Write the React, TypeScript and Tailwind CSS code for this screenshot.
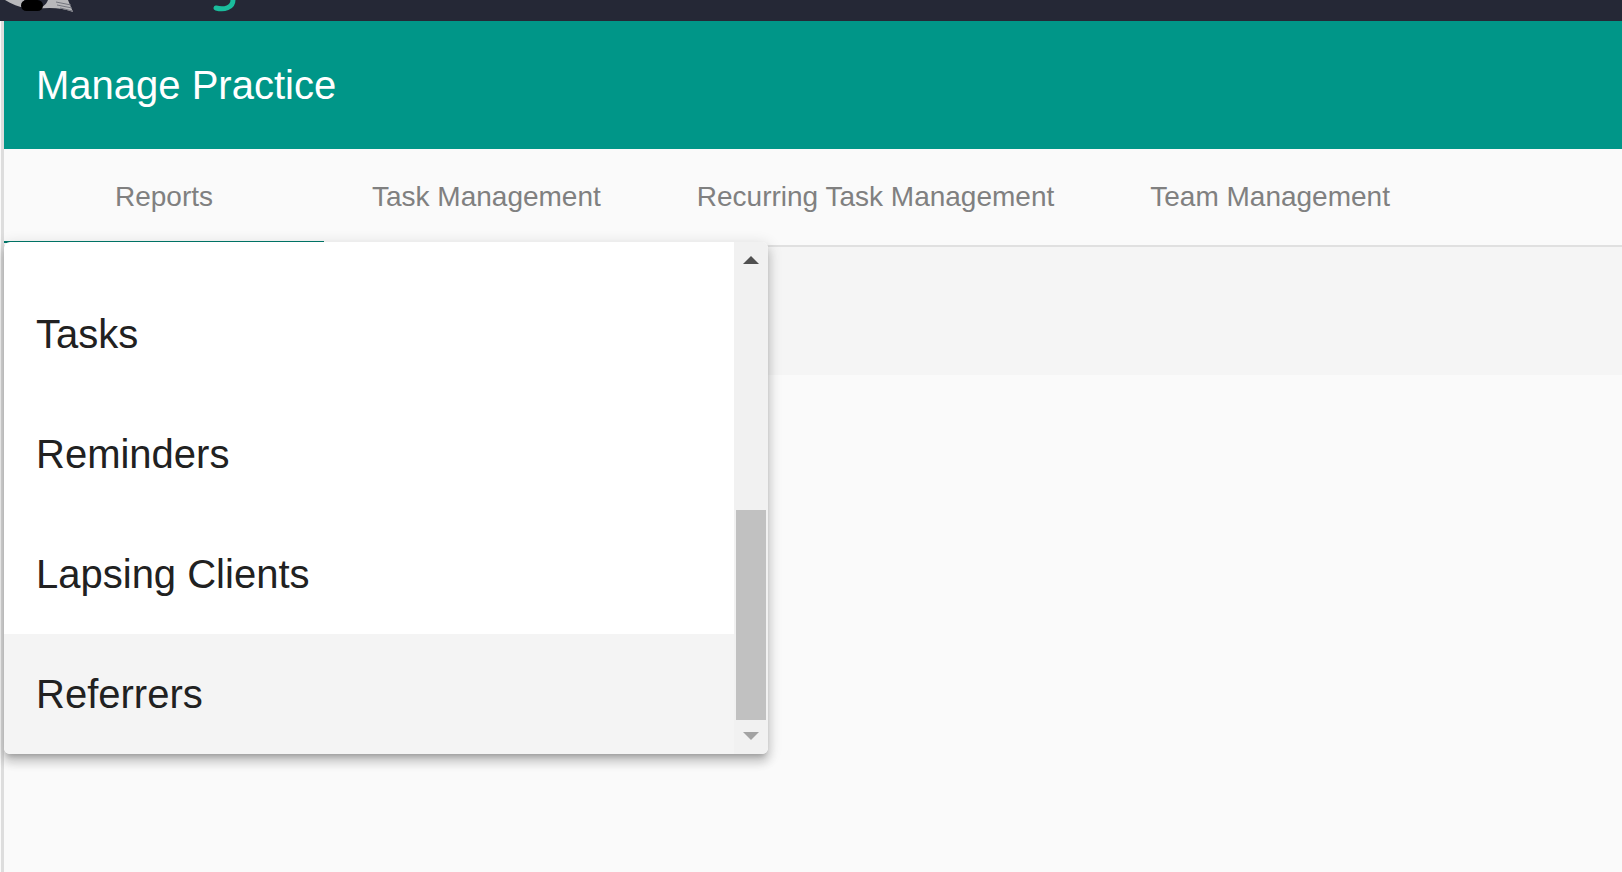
import React from "react";

const tabs = [
  { label: "Reports", className: "w-[320px] shrink-0" },
  { label: "Task Management", className: "px-12" },
  { label: "Recurring Task Management", className: "px-12" },
  { label: "Team Management", className: "px-12" },
];

const items = ["Tasks", "Reminders", "Lapsing Clients", "Referrers"];

const App: React.FC = () => {
  return (
    <div className="relative flex h-[872px] flex-col overflow-hidden bg-[#fafafa] font-['Liberation_Sans',Arial,sans-serif]">
      {/* Top bar, cut off by the window */}
      <div className="relative h-[21px] shrink-0 bg-[#252836]">
        <svg className="absolute left-0 top-0" width="240" height="21" viewBox="0 0 240 21" fill="none">
          <path d="M5 0H24L28 9C19 7 11 4 5 0Z" fill="#b8b8bb" />
          <path d="M36 9C42 8 46 5 48 0H68L73 12C63 8 50 7 36 9Z" fill="#b8b8bb" />
          <path d="M56 2L71 5M57 5L72 8M60 8L73 11" stroke="#74767f" />
          <rect x="21" y="0" width="22" height="11" rx="5.5" fill="#000" />
          <path d="M233 0C233 8 224 10 216 8" stroke="#1abc9c" strokeWidth="5" strokeLinecap="round" />
        </svg>
      </div>

      <div className="ml-px flex min-h-0 flex-1 flex-col border-l-[3px] border-[#dddddd]">
        {/* Header */}
        <div className="flex h-[128px] shrink-0 items-center bg-[#009688] pl-8">
          <h1 className="text-[40px] font-normal leading-none text-white">Manage Practice</h1>
        </div>

        {/* Tabs */}
        <div className="flex h-[98px] shrink-0 border-b-2 border-[#e0e0e0]">
          {tabs.map((tab) => (
            <div
              key={tab.label}
              className={`flex h-[96px] items-center justify-center text-[28px] text-[#808080] ${tab.className}`}
            >
              {tab.label}
            </div>
          ))}
        </div>

        <div className="h-[128px] shrink-0 bg-[#f5f5f5]" />
      </div>

      {/* Active tab underline */}
      <div className="absolute left-1 top-[241px] h-[2px] w-[320px] bg-[#00796b]" />

      {/* Open dropdown */}
      <div className="absolute left-1 top-[242px] flex h-[512px] w-[764px] overflow-hidden rounded-[6px] bg-white shadow-[0_5px_5px_-3px_rgba(0,0,0,0.2),0_8px_10px_1px_rgba(0,0,0,0.14),0_3px_14px_2px_rgba(0,0,0,0.12)]">
        <div className="flex flex-1 flex-col justify-end">
          {items.map((item, i) => (
            <div
              key={item}
              className={`flex h-[120px] items-center pl-8 text-[40px] text-[#212121] ${i === 3 ? "bg-[#f4f4f4]" : ""}`}
            >
              {item}
            </div>
          ))}
        </div>
        <div className="flex w-[34px] shrink-0 flex-col items-center bg-[#f1f1f1]">
          <svg className="mt-[14px] shrink-0" width="16" height="9" viewBox="0 0 16 9">
            <path d="M8 0L16 8H0Z" fill="#505050" />
          </svg>
          <div className="mt-[245px] h-[210px] w-[30px] shrink-0 bg-[#c1c1c1]" />
          <svg className="mt-[12px] shrink-0" width="16" height="9" viewBox="0 0 16 9">
            <path d="M0 0H16L8 8Z" fill="#a3a3a3" />
          </svg>
        </div>
      </div>
    </div>
  );
};

export default App;
